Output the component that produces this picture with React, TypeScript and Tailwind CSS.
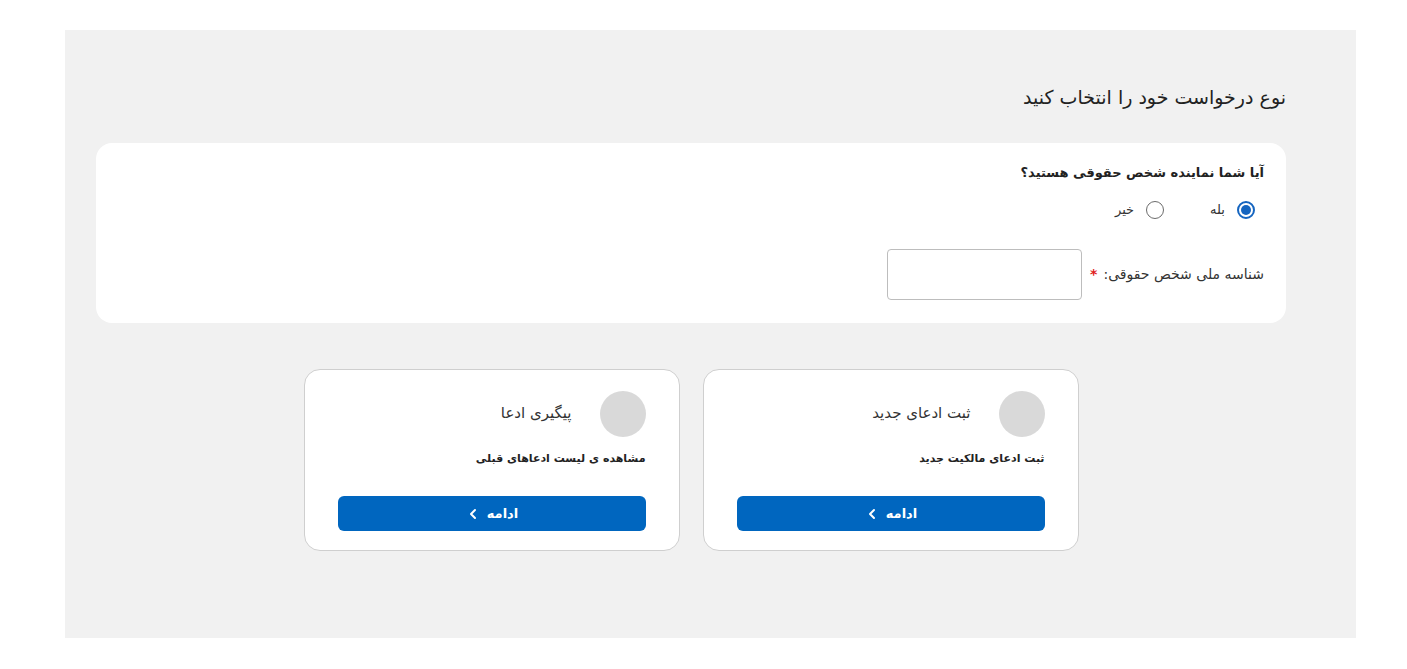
import { ChevronLeft } from "lucide-react";

const options = [
    {
        title: "ثبت ادعای جدید",
        desc: "ثبت ادعای مالکیت جدید",
    },
    {
        title: "پیگیری ادعا",
        desc: "مشاهده ی لیست ادعاهای قبلی",
    },
];

function Radio({ checked, label }: { checked?: boolean; label: string }) {
    return (
        <label className="flex items-center gap-[12px] text-[13px] text-[#333]">
            <span
                className={
                    checked
                        ? "flex h-[18px] w-[18px] items-center justify-center rounded-full border-2 border-[#1565c0]"
                        : "flex h-[18px] w-[18px] items-center justify-center rounded-full border-[1.5px] border-[#6b6b6b]"
                }
            >
                {checked && <span className="h-[10px] w-[10px] rounded-full bg-[#1565c0]" />}
            </span>
            {label}
        </label>
    );
}

export default function App() {
    return (
        <div
            dir="rtl"
            className="min-h-[669px] bg-white pt-[30px]"
            style={{ fontFamily: '"DejaVu Sans", "Noto Sans", sans-serif' }}
        >
            <div className="mr-[51px] ml-[65px] h-[608px] bg-[#f1f1f1] pr-[70px] pl-[31px] pt-[52px]">
                <h1 className="h-[31px] text-[19px] leading-[30px] text-[#222]">نوع درخواست خود را انتخاب کنید</h1>

                <div className="mt-[30px] rounded-[16px] bg-white pr-[22px] pl-[22px] pt-[20px] pb-[23px]">
                    <div className="text-[13px] font-bold leading-[20px] text-[#222]">آیا شما نماینده شخص حقوقی هستید؟</div>
                    <div className="mt-[17px] mr-[9px] flex gap-[46px]">
                        <Radio checked label="بله" />
                        <Radio label="خیر" />
                    </div>
                    <div className="mt-[29px] flex items-center gap-[8px]">
                        <span className="text-[14px] text-[#333]">
                            شناسه ملی شخص حقوقی:
                            <span className="mr-[6px] font-bold text-[#e02020]">*</span>
                        </span>
                        <input className="h-[51px] w-[195px] rounded-[4px] border border-[#bdbdbd] bg-white outline-none" />
                    </div>
                </div>

                <div className="mt-[46px] flex justify-center gap-[23px]">
                    {options.map((opt) => (
                        <div
                            key={opt.title}
                            className="w-[376px] rounded-[16px] border border-[#cfcfcf] bg-white px-[33px] pt-[21px] pb-[19px]"
                        >
                            <div className="flex items-center gap-[28px]">
                                <div className="h-[46px] w-[46px] rounded-full bg-[#d9d9d9]" />
                                <div className="text-[15px] text-[#333]">{opt.title}</div>
                            </div>
                            <div className="mt-[14px] text-[11px] font-bold text-[#222]">{opt.desc}</div>
                            <button className="mt-[29px] flex h-[35px] w-full items-center justify-center gap-[6px] rounded-[6px] bg-[#0066bf] text-[13px] font-bold text-white">
                                ادامه
                                <ChevronLeft size={16} strokeWidth={3} />
                            </button>
                        </div>
                    ))}
                </div>
            </div>
        </div>
    );
}
